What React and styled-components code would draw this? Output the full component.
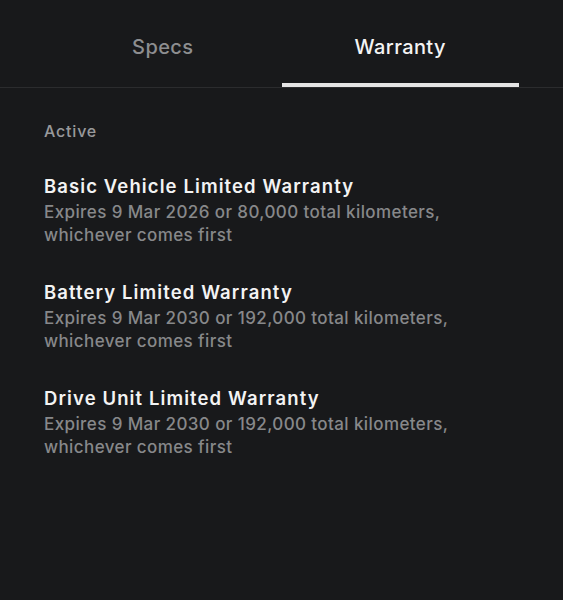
import React, { useState } from 'react'
import styled, { createGlobalStyle } from 'styled-components'

const warranties = [
  { id: 1, title: 'Basic Vehicle Limited Warranty', detail: 'Expires 9 Mar 2026 or 80,000 total kilometers, whichever comes first' },
  { id: 2, title: 'Battery Limited Warranty', detail: 'Expires 9 Mar 2030 or 192,000 total kilometers, whichever comes first' },
  { id: 3, title: 'Drive Unit Limited Warranty', detail: 'Expires 9 Mar 2030 or 192,000 total kilometers, whichever comes first' },
]

const App = () => {
  const [tab, setTab] = useState('warranty')

  return (
    <Page>
      <GlobalStyle />
      <Tabs>
        <Tab $active={tab === 'specs'} onClick={() => setTab('specs')}>Specs</Tab>
        <Tab $active={tab === 'warranty'} onClick={() => setTab('warranty')}>Warranty</Tab>
      </Tabs>
      <Content>
        <Label>Active</Label>
        {warranties.map((w) => (
          <Item key={w.id}>
            <Title>{w.title}</Title>
            <Detail>{w.detail}</Detail>
          </Item>
        ))}
      </Content>
    </Page>
  )
}

export default App

const GlobalStyle = createGlobalStyle`
  html, body {
    margin: 0;
    background: #18191b;
  }
  body {
    font-family: Inter, "Noto Sans", sans-serif;
    -webkit-font-smoothing: antialiased;
  }
`

const Page = styled.div`
  min-height: 600px;
  background: #18191b;
`

const Tabs = styled.div`
  display: grid;
  grid-template-columns: 1fr 1fr;
  padding: 0 44px;
  border-bottom: 1px solid #2b2c2e;
`

const Tab = styled.button`
  height: 87px;
  padding: 35px 0 0;
  box-sizing: border-box;
  display: flex;
  align-items: flex-start;
  justify-content: center;
  background: none;
  border: none;
  border-bottom: 4px solid ${(p) => (p.$active ? '#e4e4e4' : 'transparent')};
  color: ${(p) => (p.$active ? '#f4f4f4' : '#8d8e90')};
  font-family: Inter, sans-serif;
  font-size: 20px;
  font-weight: 500;
  letter-spacing: 0.4px;
  line-height: 24px;
  cursor: pointer;
`

const Content = styled.div`
  padding: 33px 44px 0;
  display: flex;
  flex-direction: column;
  gap: 33px;
`

const Label = styled.div`
  color: #98999b;
  font-size: 16px;
  font-weight: 500;
  letter-spacing: 0.8px;
  line-height: 20px;
`

const Item = styled.div`
  display: flex;
  flex-direction: column;
  gap: 3px;
`

const Title = styled.div`
  color: #f3f3f3;
  font-size: 18.5px;
  font-weight: 600;
  letter-spacing: 1.1px;
  line-height: 24px;
`

const Detail = styled.div`
  color: #87888a;
  font-size: 17px;
  font-weight: 500;
  letter-spacing: 0.4px;
  line-height: 23px;
  max-width: 450px;
`
